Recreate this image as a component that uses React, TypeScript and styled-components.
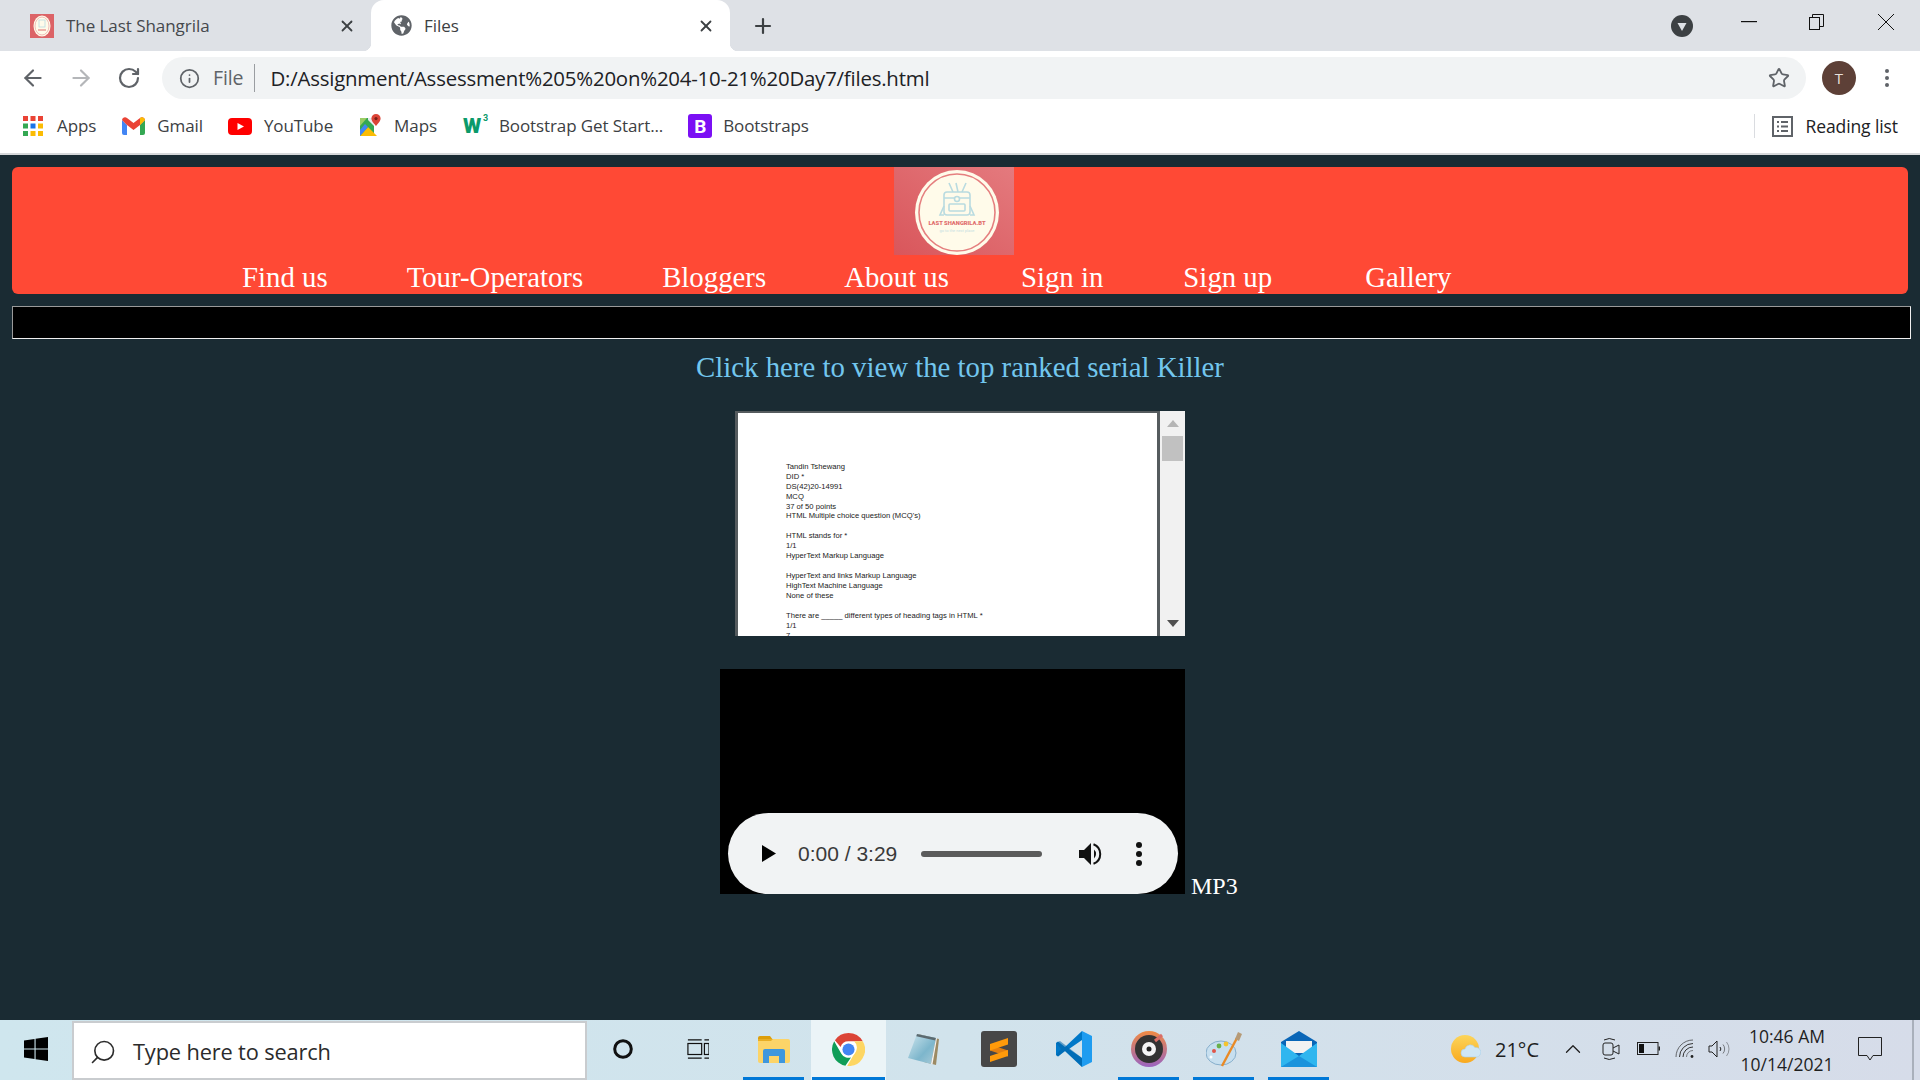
import React from "react";
import styled, { createGlobalStyle } from "styled-components";
import { ArrowLeft, ArrowRight, RotateCw, Info, Plus, X, Star, Search, ChevronUp } from "lucide-react";
import { FaGlobeAmericas } from "react-icons/fa";

const Global = createGlobalStyle`
  html, body { margin: 0; padding: 0; background: #1a2b33; }
  body { font-family: "Open Sans", "Noto Sans", sans-serif; overflow: hidden; }
  * { box-sizing: border-box; }
`;

const UI = `"Open Sans", "Noto Sans", sans-serif`;
const Serif = `"Liberation Serif", "Times New Roman", serif`;

const Screen = styled.div`
  width: 1920px; height: 1080px; display: flex; flex-direction: column; overflow: hidden;
`;

/* browser chrome */
const TabStrip = styled.div`
  height: 51px; background: #dee1e6; display: flex; align-items: stretch; padding-left: 14px; flex: none;
`;
const Tab = styled.div<{ $active?: boolean; $w: number }>`
  position: relative; width: ${p => p.$w}px; display: flex; align-items: center;
  padding: 0 15px 0 ${p => (p.$active ? 20 : 16)}px;
  background: ${p => (p.$active ? "#fff" : "transparent")};
  border-radius: 13px 13px 0 0;
  ${p => p.$active ? `
    &::before, &::after { content: ""; position: absolute; bottom: 0; width: 8px; height: 8px; }
    &::before { left: -8px; background: radial-gradient(circle at 0 0, transparent 8px, #fff 8.5px); }
    &::after { right: -8px; background: radial-gradient(circle at 100% 0, transparent 8px, #fff 8.5px); }
  ` : ""}
`;
const TabTitle = styled.span<{ $active?: boolean }>`
  flex: 1; margin-left: 12px; font: 400 17px/20px ${UI}; color: ${p => (p.$active ? "#3c4043" : "#45484d")};
  letter-spacing: -0.05px; white-space: nowrap;
`;
const NewTab = styled.div`
  width: 24px; margin-left: 21px; display: flex; align-items: center; color: #3c4043;
`;
const StripSpacer = styled.div` flex: 1; `;
const ProfileDrop = styled.div`
  align-self: center; margin-right: 21.5px; width: 22px; height: 22px; display: flex;
`;
const WinBtn = styled.div`
  width: 68.5px; display: flex; align-items: center; justify-content: center; padding-bottom: 8px;
`;
const Toolbar = styled.div`
  height: 51px; background: #fff; display: flex; align-items: center; padding: 3px 0 0 9px; flex: none;
`;
const NavBtn = styled.div<{ $off?: boolean }>`
  width: 48px; display: flex; justify-content: center; color: ${p => (p.$off ? "#b4b6b9" : "#5f6368")};
`;
const AddressBar = styled.div`
  margin-left: 9px; width: 1644px; height: 42px; border-radius: 21px; background: #f1f3f4;
  display: flex; align-items: center; padding: 0 16px 0 17px; color: #5f6368;
`;
const Scheme = styled.span`
  margin-left: 13px; font: 400 19.5px/22px ${UI}; color: #5f6368; letter-spacing: -0.1px;
`;
const Divider = styled.span`
  width: 1px; height: 28px; background: #9a9da1; margin: 0 15px 0 11px;
`;
const Url = styled.span`
  flex: 1; font: 400 20.4px/24px ${UI}; color: #202124; white-space: nowrap; letter-spacing: -0.2px;
`;
const Avatar = styled.div`
  margin-left: 16px; width: 34px; height: 34px; border-radius: 50%; background: #5d4037; color: #e8e0dc;
  display: flex; align-items: center; justify-content: center; font: 400 15px/1 ${UI};
`;
const MenuBtn = styled.div`
  margin-left: 14px; width: 34px; display: flex; justify-content: center;
`;
const BookmarkBar = styled.div`
  height: 51px; background: #fff; display: flex; align-items: center; padding: 0 22px 3px 23px; flex: none;
`;
const Bookmark = styled.div<{ $ml: number; $gap: number }>`
  display: flex; align-items: center; margin-left: ${p => p.$ml}px; gap: ${p => p.$gap}px;
  font: 400 17px/20px ${UI}; color: #3c4043; white-space: nowrap; letter-spacing: -0.1px;
`;
const W3Mark = styled.span`
  display: inline-block; width: 24px; font: 900 21px/24px Roboto, sans-serif; color: #0b9a6a; position: relative;
  & sup { position: absolute; top: -1px; right: -1px; font-size: 9px; line-height: 10px; font-weight: 700; }
`;
const BootMark = styled.span`
  display: flex; width: 24px; height: 24px; border-radius: 3px; background: #7b10f4; color: #fff;
  align-items: center; justify-content: center; font: 700 19px/1 Roboto, sans-serif;
`;
const ReadingList = styled.div`
  margin-left: auto; height: 24px; border-left: 1px solid #dadce0; padding-left: 17px; display: flex; align-items: center; gap: 13px;
  font: 400 17.5px/20px ${UI}; color: #202124; letter-spacing: -0.1px;
`;
const ChromeEdge = styled.div` height: 2px; background: #d6d8da; flex: none; `;

/* page */
const Page = styled.main`
  flex: 1; min-height: 0; background: #1a2b33; padding: 12px 10px 0 12px; overflow: hidden;
`;
const Header = styled.header`
  width: 1896px; height: 127px; background: #ff4935; border-radius: 6px; display: flex; flex-direction: column; overflow: hidden;
`;
const LogoBox = styled.div`
  margin-left: 882px; width: 120px; height: 88px; flex: none; display: flex;
`;
const NavRow = styled.nav`
  display: flex; margin-top: 6px; padding-left: 230px; font: 400 28.8px/32px ${Serif}; color: #fff;
`;
const NavLink = styled.a<{ $ml: number }>`
  margin-left: ${p => p.$ml}px; white-space: nowrap;
`;
const BlackBar = styled.div`
  margin-top: 12px; width: 1899px; height: 33px; background: #000;
  border: 1px solid; border-color: #9a9a9a #f0f0f0 #f0f0f0 #9a9a9a;
`;
const KillerLink = styled.a`
  display: block; margin: 12px 0 0 0; width: 1896px; text-align: center; font: 400 28.8px/32px ${Serif}; color: #72c6ee;
`;
const FrameRow = styled.div`
  margin: 28px 0 0 723px; width: 450px; height: 225px; display: flex;
`;
const Doc = styled.div`
  width: 425px; height: 225px; background: #fff; overflow: hidden;
  border-style: solid; border-color: #555b5e; border-width: 2px 3px 0 3px;
  padding: 49px 0 0 48px;
`;
const DocLine = styled.div<{ $tight?: boolean }>`
  height: ${p => (p.$tight ? 9 : 10)}px; font: 400 7.65px/10px "Liberation Sans", Arial, sans-serif; color: #222; white-space: nowrap;
`;
const ScrollTrack = styled.div`
  width: 25px; height: 225px; background: #f1f1f1; display: flex; flex-direction: column; align-items: center;
`;
const ScrollArrow = styled.div`
  height: 25px; flex: none; display: flex; align-items: center; justify-content: center;
`;
const ScrollThumb = styled.div`
  width: 21px; height: 25px; background: #c1c1c1; flex: none;
`;
const ScrollGap = styled.div` flex: 1; `;
const AudioRow = styled.div`
  margin: 33px 0 0 708px; display: flex; align-items: flex-end; gap: 6px;
`;
const AudioBox = styled.div`
  width: 465px; height: 225px; background: #000; display: flex; align-items: flex-end; padding: 0 7px 0 8px;
`;
const Pill = styled.div`
  width: 450px; height: 81px; border-radius: 41px; background: #f1f3f4; display: flex; align-items: center; padding-left: 34px;
`;
const TimeText = styled.span`
  margin-left: 22px; font: 400 21px/24px "Liberation Sans", Arial, sans-serif; color: #3a3a3a; white-space: nowrap; width: 123px;
`;
const Track = styled.div`
  width: 121px; height: 6px; border-radius: 3px; background: #5b5b5b;
`;
const AudioMenu = styled.div`
  margin-left: 19px; width: 34px; display: flex; justify-content: center;
`;
const Mp3 = styled.span`
  font: 400 24px/24px ${Serif}; color: #fff; margin-bottom: -4px;
`;

/* taskbar */
const Taskbar = styled.footer`
  height: 60px; flex: none; display: flex; align-items: stretch;
  background: linear-gradient(90deg, #cfe6ee 0%, #d1e3ec 50%, #d6dce9 100%);
`;
const StartBtn = styled.div`
  width: 72px; display: flex; align-items: center; justify-content: center; padding-bottom: 2px;
`;
const SearchBox = styled.div`
  width: 515px; margin-top: 1px; background: #fff; border: 2px solid #c9cccf;
  display: flex; align-items: center; padding: 2px 0 0 15px; gap: 16px;
  font: 400 21.8px/28px ${UI}; color: #2b2b2b; letter-spacing: -0.15px;
`;
const TaskSlot = styled.div<{ $w?: number; $active?: boolean; $open?: boolean }>`
  position: relative; width: ${p => p.$w ?? 75}px; display: flex; align-items: center; justify-content: center; padding-bottom: 2px;
  background: ${p => (p.$active ? "#ebf4f7" : "transparent")};
  ${p => (p.$open || p.$active) ? `
    &::after { content: ""; position: absolute; bottom: 0; height: 3px; background: #0078d7;
      left: ${p.$active ? 1 : 7}px; right: ${p.$active ? 1 : 7}px; }
  ` : ""}
`;
const TraySpacer = styled.div` flex: 1; `;
const Weather = styled.div`
  display: flex; align-items: center; gap: 14px; padding: 0 16px 0 0; font: 400 20px/26px ${UI}; color: #1f1f1f;
`;
const TraySlot = styled.div<{ $w: number }>`
  width: ${p => p.$w}px; display: flex; align-items: center; justify-content: center; padding-bottom: 2px; color: #1f1f1f;
`;
const Clock = styled.div`
  width: 108px; display: flex; flex-direction: column; align-items: center; font: 400 17.5px/28px ${UI}; color: #1f1f1f; padding-top: 2px;
`;
const DesktopEdge = styled.div`
  width: 21px; display: flex; justify-content: flex-end; padding-right: 6px;
  &::after { content: ""; width: 2px; background: #a9b0bb; }
`;

/* drawings */
const Logo = () => (
  <svg width="120" height="88" viewBox="0 0 120 88">
    <defs>
      <linearGradient id="lg" x1="0" y1="1" x2="1" y2="0">
        <stop offset="0" stopColor="#d9565b" />
        <stop offset="1" stopColor="#e47a7e" />
      </linearGradient>
    </defs>
    <rect width="120" height="88" fill="url(#lg)" />
    <ellipse cx="63" cy="45.500" rx="42" ry="42.500" fill="#fffbea" />
    <ellipse cx="63" cy="45.500" rx="38" ry="38.500" fill="none" stroke="#e57f7f" strokeWidth="1.600" />
    <g fill="none" stroke="#b9dbe0" strokeWidth="1.600">
      <path d="M55 16l4 9M62 16l2 9M72 16l-4 9" />
      <rect x="50" y="25" width="26" height="23" rx="3" />
      <path d="M50 31h26" />
      <rect x="55" y="37" width="16" height="7" rx="1" />
      <circle cx="63" cy="32" r="2.500" fill="#fffbea" />
      <path d="M50 39l-4 9h4M76 39l4 9h-4" />
    </g>
    <text x="63" y="57.500" textAnchor="middle" fontFamily="Roboto, sans-serif" fontWeight="900" fontSize="5.800" fill="#df6c6c">LAST SHANGRILA.BT</text>
    <text x="63" y="64.500" textAnchor="middle" fontFamily="Roboto, sans-serif" fontSize="4" fill="#c6dfe2">go to the next place</text>
  </svg>
);

const Favicon = () => (
  <svg width="24" height="24" viewBox="0 0 24 24">
    <rect width="24" height="24" fill="#dc6367" />
    <ellipse cx="12" cy="12" rx="8.500" ry="10.500" fill="#fffbea" />
    <ellipse cx="12" cy="12" rx="7" ry="9" fill="none" stroke="#e7a0a0" strokeWidth=".7" />
    <rect x="9" y="6" width="6" height="7" fill="none" stroke="#b9dbe0" strokeWidth=".8" />
    <path d="M8 16h8" stroke="#df6c6c" strokeWidth="1" />
  </svg>
);

const Apps = () => (
  <svg width="20" height="20" viewBox="0 0 20 20">
    {["#ea4335", "#ea4335", "#ea4335", "#34a853", "#1a73e8", "#fbbc04", "#34a853", "#fbbc04", "#fbbc04"].map((c, i) => (
      <rect key={i} x={(i % 3) * 7.5} y={Math.floor(i / 3) * 7.5} width="5" height="5" fill={c} />
    ))}
  </svg>
);
const Gmail = () => (
  <svg width="23" height="18" viewBox="0 0 23 18">
    <path d="M0 3v13a2 2 0 0 0 2 2h3V8z" fill="#4285f4" />
    <path d="M23 3v13a2 2 0 0 1-2 2h-3V8z" fill="#34a853" />
    <path d="M0 3a3 3 0 0 1 5-2l6.500 5L18 1a3 3 0 0 1 5 2l-5 5-6.500 5L5 8z" fill="#ea4335" />
    <path d="M18 1a3 3 0 0 1 5 2l-5 5z" fill="#fbbc04" />
  </svg>
);
const YouTube = () => (
  <svg width="24" height="17" viewBox="0 0 24 17">
    <rect width="24" height="17" rx="4" fill="#f00" />
    <path d="M9.500 5l6.500 3.500L9.500 12z" fill="#fff" />
  </svg>
);
const Maps = () => (
  <svg width="22" height="24" viewBox="0 0 22 24">
    <path d="M1 4h14v18H1z" fill="#34a853" />
    <path d="M1 22l8-9 9 9z" fill="#fbbc04" />
    <path d="M1 22l8-9-3-3-5 6z" fill="#4285f4" />
    <path d="M1 4h7L1 12z" fill="#9ccc65" />
    <path d="M9 6l6 6V4H9z" fill="#e8eaed" />
    <path d="M17 0a4.600 4.600 0 0 0-4.600 4.600c0 3 4.600 7.400 4.600 7.400s4.600-4.400 4.600-7.400A4.600 4.600 0 0 0 17 0z" fill="#db4437" />
    <circle cx="17" cy="4.600" r="1.600" fill="#7a1f17" />
  </svg>
);
const ReadIcon = () => (
  <svg width="21" height="21" viewBox="0 0 21 21" fill="none" stroke="#5f6368" strokeWidth="2">
    <rect x="1" y="1" width="19" height="19" />
    <path d="M5 6h2M9 6h7M5 10.500h2M9 10.500h7M5 15h2M9 15h7" strokeWidth="1.800" />
  </svg>
);
const Dots = ({ c = "#5f6368", r = 2, gap = 7 }: { c?: string; r?: number; gap?: number }) => (
  <svg width={r * 2} height={gap * 2 + r * 2} viewBox={`0 0 ${r * 2} ${gap * 2 + r * 2}`}>
    {[0, 1, 2].map(i => <circle key={i} cx={r} cy={r + gap * i} r={r} fill={c} />)}
  </svg>
);
const DropCircle = () => (
  <svg width="22" height="22" viewBox="0 0 22 22">
    <circle cx="11" cy="11" r="11" fill="#3c4043" />
    <path d="M6.500 8h9L11 16z" fill="#dee1e6" />
  </svg>
);
const MinIcon = () => <svg width="16" height="2" viewBox="0 0 16 2"><rect width="16" height="1.200" fill="#111" /></svg>;
const RestoreIcon = () => (
  <svg width="16" height="16" viewBox="0 0 16 16" fill="none" stroke="#111" strokeWidth="1">
    <rect x=".5" y="3.500" width="10" height="12" />
    <path d="M3.500 3.500V.5h11v12h-4" />
  </svg>
);
const CloseIcon = () => (
  <svg width="16" height="16" viewBox="0 0 16 16" stroke="#111" strokeWidth="1"><path d="M0 0l16 16M16 0L0 16" /></svg>
);
const ArrowUp = () => <svg width="12" height="7" viewBox="0 0 12 7"><path d="M0 7L6 0l6 7z" fill="#b5b5b5" /></svg>;
const ArrowDown = () => <svg width="12" height="7" viewBox="0 0 12 7"><path d="M0 0l6 7 6-7z" fill="#505050" /></svg>;
const Play = () => <svg width="14" height="17" viewBox="0 0 14 17"><path d="M0 0l14 8.500L0 17z" fill="#000" /></svg>;
const Speaker = () => (
  <svg width="24" height="22" viewBox="0 0 24 22" style={{ marginLeft: 37 }}>
    <path d="M0 7h5l7-7v22l-7-7H0z" fill="#111" />
    <path d="M15 6.500a6 6 0 0 1 0 9z" fill="#111" />
    <path d="M14.500 1.200a10.500 10.500 0 0 1 0 19.600" fill="none" stroke="#111" strokeWidth="2" />
  </svg>
);
const WinLogo = () => (
  <svg width="24" height="24" viewBox="0 0 24 24" fill="#000">
    <path d="M0 3.400l10.500-1.500v9.500H0zM11.600 1.700L24 0v11.400H11.600zM0 12.600h10.500v9.500L0 20.600zM11.600 12.600H24V24l-12.400-1.700z" />
  </svg>
);
const CortanaIcon = () => (
  <svg width="20" height="20" viewBox="0 0 20 20"><circle cx="10" cy="10" r="8.300" fill="none" stroke="#111" strokeWidth="3" /></svg>
);
const TaskViewIcon = () => (
  <svg width="22" height="22" viewBox="0 0 24 22" fill="none" stroke="#111" strokeWidth="1.300">
    <path d="M1 1h15M1 21h15M19 1h5M19 21h5" />
    <rect x="1" y="5" width="15" height="12" />
    <rect x="19" y="5" width="5" height="12" />
  </svg>
);
const ExplorerIcon = () => (
  <svg width="32" height="27" viewBox="0 0 32 27">
    <path d="M0 2a2 2 0 0 1 2-2h10l3 4h-15z" fill="#dd9e0a" />
    <path d="M0 3h30a2 2 0 0 1 2 2v20a2 2 0 0 1-2 2H2a2 2 0 0 1-2-2z" fill="#fcd468" />
    <path d="M0 3h15l-2 2H0z" fill="#e8ae25" />
    <path d="M5 27V15a2 2 0 0 1 2-2h18a2 2 0 0 1 2 2v12h-6v-7H11v7z" fill="#3e97dd" />
  </svg>
);
const ChromeIcon = () => (
  <svg width="33" height="33" viewBox="0 0 48 48">
    <circle cx="24" cy="24" r="24" fill="#fff" />
    <path d="M24 0a24 24 0 0 1 20.800 12H24a12 12 0 0 0-11.500 8.500L4.200 10.500A24 24 0 0 1 24 0z" fill="#db4437" />
    <path d="M3.200 12L13.600 30a12 12 0 0 0 14 5.500L19.500 47.600A24 24 0 0 1 3.200 12z" fill="#0f9d58" />
    <path d="M44.800 12A24 24 0 0 1 22 48l10.400-18a12 12 0 0 0-.4-18z" fill="#fdd663" />
    <circle cx="24" cy="24" r="11" fill="#fff" />
    <circle cx="24" cy="24" r="8.800" fill="#4285f4" />
  </svg>
);
const NotepadIcon = () => (
  <svg width="34" height="34" viewBox="0 0 34 34">
    <defs>
      <linearGradient id="np" x1="0" y1="0" x2="1" y2="1">
        <stop offset="0" stopColor="#cfe6ee" /><stop offset=".6" stopColor="#7db6cc" /><stop offset="1" stopColor="#a9cbd8" />
      </linearGradient>
    </defs>
    <path d="M11 2l21 5-3 26-12-3z" fill="#9c8a63" />
    <path d="M10 2l19 4-5 26L1 26z" fill="url(#np)" />
    <path d="M10 2l19 4-.6 2.500L9.300 4.300z" fill="#5c6a70" />
    <path d="M24 32l5-26 1 .3-4.500 26z" fill="#f3f3f3" />
  </svg>
);
const SublimeIcon = () => (
  <svg width="36" height="36" viewBox="0 0 36 36">
    <rect width="36" height="36" rx="3" fill="#474747" />
    <path d="M9 13.500l9 3 9 3v6l-18-6z" fill="#e37f10" />
    <path d="M27 7L9 13v6.500l18-6z" fill="#ff9a0a" />
    <path d="M27 19L9 25v6l18-6z" fill="#ff9a0a" />
  </svg>
);
const VSCodeIcon = () => (
  <svg width="36" height="36" viewBox="0 0 36 36">
    <path d="M26 0l10 5v26l-10 5z" fill="#1f9cf0" />
    <path d="M26 0L9 16 2 10.500 0 12v12l2 1.500L9 20l17 16 0-9-13-9 13-9z" fill="#0078c8" />
    <path d="M0 12l4-2 22 17v9L9 20l-7 5.500L0 24l5-6z" fill="#0065a9" opacity=".55" />
  </svg>
);
const GrooveIcon = () => (
  <svg width="36" height="36" viewBox="0 0 36 36">
    <defs>
      <linearGradient id="gr" x1="0" y1="0" x2="0" y2="1">
        <stop offset="0" stopColor="#f08a43" /><stop offset="1" stopColor="#9a64c0" />
      </linearGradient>
    </defs>
    <circle cx="18" cy="18" r="18" fill="url(#gr)" />
    <circle cx="18" cy="18" r="14" fill="#333" />
    <circle cx="18" cy="18" r="7" fill="#f4f4f4" />
    <circle cx="18" cy="18" r="2.500" fill="#222" />
    <path d="M24 10l7-6" stroke="#d96d66" strokeWidth="3" />
  </svg>
);
const PaintIcon = () => (
  <svg width="36" height="36" viewBox="0 0 36 36">
    <ellipse cx="15" cy="22" rx="15" ry="12" fill="#c7dfef" stroke="#86aecb" strokeWidth="1" />
    <circle cx="8" cy="20" r="2" fill="#e0564a" />
    <circle cx="13" cy="15" r="2.400" fill="#68b04a" />
    <circle cx="20" cy="13" r="2.400" fill="#f4c430" />
    <circle cx="5" cy="26" r="1.500" fill="#fff" />
    <path d="M16 35L31 7" stroke="#e98a26" strokeWidth="2.400" />
    <path d="M29 8l3-7 4 2-3 7z" fill="#b69a76" />
  </svg>
);
const MailIcon = () => (
  <svg width="36" height="36" viewBox="0 0 36 36">
    <path d="M0 11L18 0l18 11v25H0z" fill="#0a66b7" />
    <path d="M5 10h26v12H5z" fill="#f2f2f2" />
    <path d="M0 12l18 13 18-13v24H0z" fill="#2fb6ef" />
    <path d="M0 36l18-11 18 11z" fill="#1b93dc" />
  </svg>
);
const WeatherIcon = () => (
  <svg width="30" height="30" viewBox="0 0 30 30">
    <defs>
      <linearGradient id="su" x1="0" y1="0" x2="0" y2="1"><stop offset="0" stopColor="#fcd55a" /><stop offset="1" stopColor="#f9a91f" /></linearGradient>
    </defs>
    <circle cx="14" cy="14" r="14" fill="url(#su)" />
    <path d="M14 22a4 4 0 0 1 0-8 5.500 5.500 0 0 1 10-1.500 4.600 4.600 0 0 1 2 9.500z" fill="#cfe6f5" stroke="#a9d0ea" strokeWidth=".6" />
  </svg>
);
const MeetIcon = () => (
  <svg width="18" height="24" viewBox="0 0 18 24" fill="none" stroke="#222" strokeWidth="1">
    <path d="M2 3q5-3 11 0M2 21q5 3 11 0" />
    <rect x="1" y="6" width="10" height="12" rx="2" />
    <path d="M11 11l6-3v9l-6-3" />
  </svg>
);
const BatteryIcon = () => (
  <svg width="23" height="14" viewBox="0 0 23 14">
    <rect x=".5" y=".5" width="20.500" height="12" fill="none" stroke="#222" />
    <rect x="2" y="2" width="5" height="9" fill="#111" />
    <rect x="21.500" y="4.500" width="1.500" height="4" fill="#222" />
  </svg>
);
const WifiIcon = () => (
  <svg width="20" height="20" viewBox="0 0 20 20" fill="none" stroke="#333" strokeWidth="1">
    <path d="M1 18A17 17 0 0 1 18 1" opacity=".7" />
    <path d="M4.500 18A13.500 13.500 0 0 1 18 4.500" />
    <path d="M8 18A10 10 0 0 1 18 8" />
    <path d="M11.500 18A6.500 6.500 0 0 1 18 11.500" opacity=".6" />
    <circle cx="17" cy="17.500" r="1.400" fill="#222" stroke="none" />
  </svg>
);
const VolumeIcon = () => (
  <svg width="23" height="18" viewBox="0 0 23 18" fill="none" stroke="#222" strokeWidth="1">
    <path d="M1 6h3l5-5v16l-5-5H1z" />
    <path d="M12 7a3 3 0 0 1 0 4" />
    <path d="M15 4.500a7 7 0 0 1 0 9" opacity=".55" />
    <path d="M18.500 2a11 11 0 0 1 0 14" opacity=".4" />
  </svg>
);
const NotifyIcon = () => (
  <svg width="24" height="24" viewBox="0 0 24 24" fill="none" stroke="#222" strokeWidth="1">
    <path d="M.5 .5h23v18H15l-3 4.500-3-4.500H.5z" />
  </svg>
);

const docLines = [
  "Tandin Tshewang", "DID *", "DS(42)20-14991", "MCQ", "37 of 50 points", "HTML Multiple choice question (MCQ's)", "",
  "HTML stands for *", "1/1", "HyperText Markup Language", "", "HyperText and links Markup Language",
  "HighText Machine Language", "None of these", "", "There are _____ different types of heading tags in HTML *", "1/1", "7",
];

export default function App() {
  return (
    <Screen>
      <Global />
      <TabStrip>
        <Tab $w={357}>
          <Favicon />
          <TabTitle>The Last Shangrila</TabTitle>
          <X size={18} color="#3c4043" strokeWidth={2.4} />
        </Tab>
        <Tab $w={359} $active>
          <FaGlobeAmericas size={21} color="#5f6368" />
          <TabTitle $active>Files</TabTitle>
          <X size={18} color="#3c4043" strokeWidth={2.4} />
        </Tab>
        <NewTab><Plus size={24} strokeWidth={2.2} /></NewTab>
        <StripSpacer />
        <ProfileDrop><DropCircle /></ProfileDrop>
        <WinBtn><MinIcon /></WinBtn>
        <WinBtn><RestoreIcon /></WinBtn>
        <WinBtn><CloseIcon /></WinBtn>
      </TabStrip>
      <Toolbar>
        <NavBtn><ArrowLeft size={26} strokeWidth={2} /></NavBtn>
        <NavBtn $off><ArrowRight size={26} strokeWidth={2} /></NavBtn>
        <NavBtn><RotateCw size={24} strokeWidth={2.2} /></NavBtn>
        <AddressBar>
          <Info size={21} strokeWidth={2} />
          <Scheme>File</Scheme>
          <Divider />
          <Url>D:/Assignment/Assessment%205%20on%204-10-21%20Day7/files.html</Url>
          <Star size={22} strokeWidth={2} />
        </AddressBar>
        <Avatar>T</Avatar>
        <MenuBtn><Dots /></MenuBtn>
      </Toolbar>
      <BookmarkBar>
        <Bookmark $ml={0} $gap={14}><Apps />Apps</Bookmark>
        <Bookmark $ml={26} $gap={12}><Gmail />Gmail</Bookmark>
        <Bookmark $ml={25} $gap={12}><YouTube />YouTube</Bookmark>
        <Bookmark $ml={26} $gap={13}><Maps />Maps</Bookmark>
        <Bookmark $ml={26} $gap={12}><W3Mark>W<sup>3</sup></W3Mark>Bootstrap Get Start...</Bookmark>
        <Bookmark $ml={25} $gap={11}><BootMark>B</BootMark>Bootstraps</Bookmark>
        <ReadingList><ReadIcon />Reading list</ReadingList>
      </BookmarkBar>
      <ChromeEdge />
      <Page>
        <Header>
          <LogoBox><Logo /></LogoBox>
          <NavRow>
            <NavLink $ml={0}>Find us</NavLink>
            <NavLink $ml={79}>Tour-Operators</NavLink>
            <NavLink $ml={79}>Bloggers</NavLink>
            <NavLink $ml={78}>About us</NavLink>
            <NavLink $ml={72}>Sign in</NavLink>
            <NavLink $ml={80}>Sign up</NavLink>
            <NavLink $ml={93}>Gallery</NavLink>
          </NavRow>
        </Header>
        <BlackBar />
        <KillerLink>Click here to view the top ranked serial Killer</KillerLink>
        <FrameRow>
          <Doc>
            {docLines.map((l, i) => <DocLine key={i} $tight={i === 4}>{l}</DocLine>)}
          </Doc>
          <ScrollTrack>
            <ScrollArrow><ArrowUp /></ScrollArrow>
            <ScrollThumb />
            <ScrollGap />
            <ScrollArrow><ArrowDown /></ScrollArrow>
          </ScrollTrack>
        </FrameRow>
        <AudioRow>
          <AudioBox>
            <Pill>
              <Play />
              <TimeText>0:00 / 3:29</TimeText>
              <Track />
              <Speaker />
              <AudioMenu><Dots c="#111" r={3} gap={9} /></AudioMenu>
            </Pill>
          </AudioBox>
          <Mp3>MP3</Mp3>
        </AudioRow>
      </Page>
      <Taskbar>
        <StartBtn><WinLogo /></StartBtn>
        <SearchBox><Search size={28} strokeWidth={1.4} style={{ transform: "scaleX(-1)" }} />Type here to search</SearchBox>
        <TaskSlot $w={72}><CortanaIcon /></TaskSlot>
        <TaskSlot $w={77}><TaskViewIcon /></TaskSlot>
        <TaskSlot $open><ExplorerIcon /></TaskSlot>
        <TaskSlot $active><ChromeIcon /></TaskSlot>
        <TaskSlot><NotepadIcon /></TaskSlot>
        <TaskSlot><SublimeIcon /></TaskSlot>
        <TaskSlot><VSCodeIcon /></TaskSlot>
        <TaskSlot $open><GrooveIcon /></TaskSlot>
        <TaskSlot $open><PaintIcon /></TaskSlot>
        <TaskSlot $open><MailIcon /></TaskSlot>
        <TraySpacer />
        <Weather><WeatherIcon />21°C</Weather>
        <TraySlot $w={36}><ChevronUp size={26} strokeWidth={1.2} /></TraySlot>
        <TraySlot $w={40}><MeetIcon /></TraySlot>
        <TraySlot $w={34}><BatteryIcon /></TraySlot>
        <TraySlot $w={40}><WifiIcon /></TraySlot>
        <TraySlot $w={28}><VolumeIcon /></TraySlot>
        <Clock><span>10:46 AM</span><span>10/14/2021</span></Clock>
        <TraySlot $w={58}><NotifyIcon /></TraySlot>
        <DesktopEdge />
      </Taskbar>
    </Screen>
  );
}
